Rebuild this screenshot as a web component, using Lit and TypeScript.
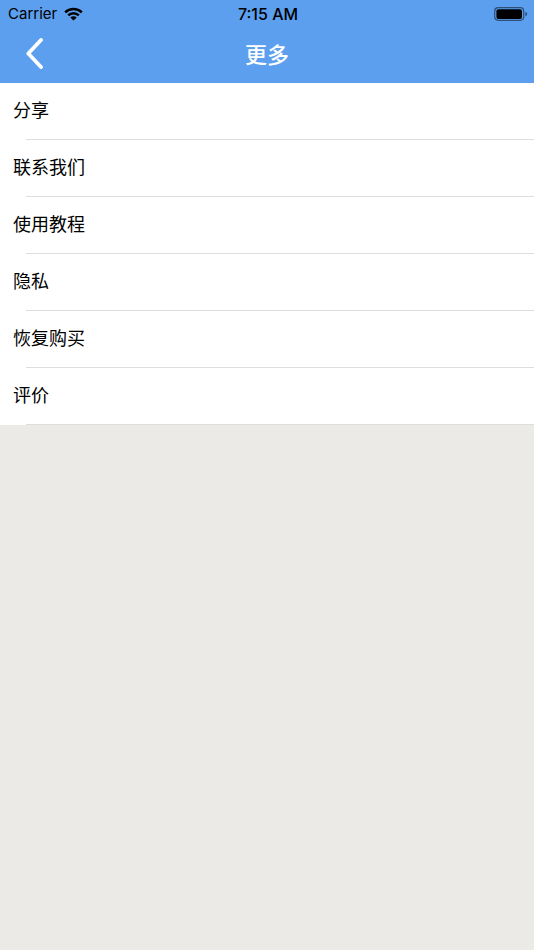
import { LitElement, html, css } from "lit";
import { customElement, property } from "lit/decorators.js";

@customElement("status-bar")
class StatusBar extends LitElement {
  static styles = css`
    :host {
      display: grid;
      grid-template-columns: 1fr auto 1fr;
      align-items: center;
      height: 26px;
      padding: 0 6px 0 8px;
      color: #000;
      font-family: Inter, "Liberation Sans", sans-serif;
      font-size: 15px;
      line-height: 26px;
    }
    .network {
      display: flex;
      align-items: center;
      gap: 7px;
    }
    .time {
      font-size: 16px;
      font-weight: 500;
      padding-top: 1px;
    }
    .carrier {
      padding-top: 1px;
    }
    .battery {
      justify-self: end;
    }
    svg {
      display: block;
    }
  `;

  render() {
    return html`
      <div class="network">
        <span class="carrier">Carrier</span>
        <svg width="19" height="14" viewBox="0 0 19 14" aria-label="Wi-Fi">
          <g fill="none" stroke="#000" stroke-width="2.5">
            <path d="M1.2 5.3a11.8 11.8 0 0 1 16.6 0" />
            <path d="M4.2 8.4a7.5 7.5 0 0 1 10.6 0" />
          </g>
          <path d="M6.3 10.5a4.5 4.5 0 0 1 6.4 0L9.5 13.6z" />
        </svg>
      </div>
      <span class="time">7:15 AM</span>
      <svg class="battery" width="34" height="14" viewBox="0 0 34 14" aria-label="Battery">
        <rect x="0.7" y="0.7" width="29" height="12.6" rx="3.5" fill="none" stroke="#000" stroke-opacity="0.5" stroke-width="1.2" />
        <rect x="2.4" y="2.3" width="25.6" height="9.6" rx="2" />
        <path d="M31.3 4.8q2 .8 2 2.3t-2 2.3z" fill-opacity="0.5" />
      </svg>
    `;
  }
}

@customElement("nav-header")
class NavHeader extends LitElement {
  @property() heading = "";

  static styles = css`
    :host {
      box-sizing: border-box;
      display: grid;
      grid-template-columns: 1fr auto 1fr;
      align-items: center;
      height: 57px;
      padding-bottom: 3px;
      color: #fff;
    }
    .back {
      justify-self: start;
      margin: 0 0 0 18px;
      padding: 6px;
      border: 0;
      background: none;
      color: inherit;
    }
    .back svg {
      display: block;
    }
    h1 {
      margin: 0;
      font-size: 22px;
      font-weight: 500;
      line-height: 32px;
    }
  `;

  render() {
    return html`
      <button class="back" aria-label="返回">
        <svg width="20" height="32" viewBox="0 0 20 32">
          <path
            d="M17 3 4.3 16.5 17 30"
            fill="none"
            stroke="currentColor"
            stroke-width="3.8"
            stroke-linecap="round"
            stroke-linejoin="round"
          />
        </svg>
      </button>
      <h1>${this.heading}</h1>
    `;
  }
}

@customElement("app-root")
class AppRoot extends LitElement {
  items = ["分享", "联系我们", "使用教程", "隐私", "恢复购买", "评价"];

  static styles = css`
    :host {
      display: block;
      min-height: 100vh;
      background: #ebeae6;
      color: #000;
      font-family: "Noto Sans CJK SC", sans-serif;
    }
    .top {
      background: #5c9fee;
    }
    .list {
      margin: 0;
      padding: 0;
      list-style: none;
      background: #fff;
    }
    .row {
      display: block;
      width: 100%;
      height: 57px;
      padding: 0 13px 5px;
      border: 0;
      background: linear-gradient(#dededf, #dededf) 26px 100% / 100% 1px no-repeat;
      color: inherit;
      font: inherit;
      font-size: 18px;
      line-height: 26px;
      text-align: left;
    }
  `;

  render() {
    return html`
      <header class="top">
        <status-bar></status-bar>
        <nav-header heading="更多"></nav-header>
      </header>
      <ul class="list">
        ${this.items.map((item) => html`<li><button class="row">${item}</button></li>`)}
      </ul>
    `;
  }
}
